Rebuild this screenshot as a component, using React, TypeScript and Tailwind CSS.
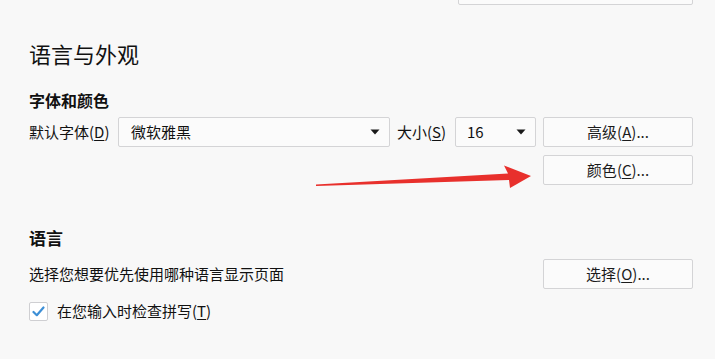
const FONT = { fontFamily: '"Noto Sans CJK SC", "Liberation Sans", sans-serif' };

const Caret = () => (
  <svg width="10" height="6" viewBox="0 0 10 6" className="shrink-0">
    <path d="M0.5 0.5h9L5 5.5z" fill="#1a1a1a" />
  </svg>
);

const Button = ({ label, hotkey }: { label: string; hotkey: string }) => (
  <button className="w-[150px] h-[30px] shrink-0 rounded-[2px] border border-[#d4d4d6] bg-[#fbfbfb] text-[15px] text-[#1b1b1b] flex items-center justify-center">
    {label}(<u className="underline-offset-2">{hotkey}</u>)...
  </button>
);

export default function App() {
  return (
    <div
      className="relative w-[715px] h-[359px] overflow-hidden bg-[#f8f8f8] text-[#111111]"
      style={FONT}
    >
      <div className="pl-[29px] pr-[22px]">
        {/* bottom edge of the control above, scrolled out of view */}
        <div className="flex justify-end -mt-[25px]">
          <div className="w-[235px] h-[30px] rounded-[2px] border border-[#d4d4d6] bg-[#fbfbfb]" />
        </div>

        <h1 className="mt-[33px] text-[22px] leading-[30px] font-normal">语言与外观</h1>
        <h2 className="mt-[21px] text-[16px] leading-[22px] font-bold">字体和颜色</h2>

        <div className="mt-[6px] flex items-center h-[30px]">
          <span className="w-[89px] shrink-0 text-[15px]">
            默认字体(<u className="underline-offset-2">D</u>)
          </span>
          <div className="w-[272px] h-[30px] shrink-0 rounded-[2px] border border-[#d4d4d6] bg-[#fbfbfb] flex items-center justify-between pl-[12px] pr-[9px] text-[15px]">
            <span>微软雅黑</span>
            <Caret />
          </div>
          <span className="w-[65px] shrink-0 pl-[7px] text-[15px]">
            大小(<u className="underline-offset-2">S</u>)
          </span>
          <div className="w-[81px] h-[30px] shrink-0 rounded-[2px] border border-[#d4d4d6] bg-[#fbfbfb] flex items-center justify-between pl-[11px] pr-[9px] text-[15px]">
            <span>16</span>
            <Caret />
          </div>
          <div className="flex-1" />
          <Button label="高级" hotkey="A" />
        </div>

        <div className="mt-[8px] flex justify-end">
          <Button label="颜色" hotkey="C" />
        </div>

        <h2 className="mt-[41px] text-[17px] leading-[24px] font-bold">语言</h2>

        <div className="mt-[9px] flex items-center justify-between h-[30px]">
          <span className="text-[15px]">选择您想要优先使用哪种语言显示页面</span>
          <Button label="选择" hotkey="O" />
        </div>

        <label className="mt-[12px] flex items-center gap-[9px] h-[20px]">
          <span className="w-[19px] h-[19px] rounded-[2px] border border-[#cfcfd2] bg-white flex items-center justify-center">
            <svg width="13" height="11" viewBox="0 0 13 11">
              <path d="M1.5 6 L4.8 9.2 L11.5 1.5" fill="none" stroke="#3d8fd6" strokeWidth="2.2" strokeLinecap="round" strokeLinejoin="round" />
            </svg>
          </span>
          <span className="text-[15px]">
            在您输入时检查拼写(<u className="underline-offset-2">T</u>)
          </span>
        </label>
      </div>

      {/* red annotation arrow over the page */}
      <svg className="absolute inset-0 pointer-events-none" width="715" height="359" viewBox="0 0 715 359">
        <polygon
          points="316,184.5 508,173.5 504,165.5 531,176 510,188 509,180 316,186"
          fill="#e8302c"
        />
      </svg>
    </div>
  );
}
